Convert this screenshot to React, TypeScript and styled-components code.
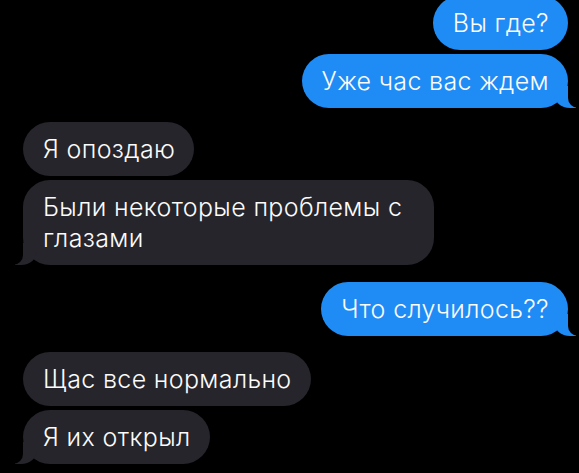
import React from 'react';
import styled, {createGlobalStyle, css} from "styled-components";

const GlobalStyle = createGlobalStyle`
  html, body {
    margin: 0;
    padding: 0;
    background: #000;
  }

  body {
    font-family: Inter, "Liberation Sans", Arial, sans-serif;
    -webkit-font-smoothing: antialiased;
  }
`

const Chat = styled.div`
  width: 579px;
  height: 473px;
  overflow: hidden;
  background: #000;
  display: flex;
  flex-direction: column;
  padding: 0 11px 0 23px;
  box-sizing: border-box;
`

const Bubble = styled.div<{ $mine?: boolean; $tail?: boolean; $gap: number }>`
  position: relative;
  align-self: ${p => p.$mine ? 'flex-end' : 'flex-start'};
  margin-top: ${p => p.$gap}px;
  max-width: 372px;
  padding: 12px 19px 11px 20px;
  border-radius: 27px;
  background: ${p => p.$mine ? '#1f8bf5' : '#26252b'};
  color: #fbfbfb;
  font-size: 25px;
  font-weight: 350;
  line-height: 31px;
  letter-spacing: 0.35px;
  z-index: 0;

  ${p => p.$tail && p.$mine && css`
    &::before {
      content: "";
      position: absolute;
      z-index: -1;
      bottom: 0;
      right: -8px;
      width: 22px;
      height: 22px;
      background: #1f8bf5;
      border-bottom-left-radius: 16px 14px;
    }

    &::after {
      content: "";
      position: absolute;
      z-index: -1;
      bottom: 0;
      right: -11px;
      width: 11px;
      height: 22px;
      background: #000;
      border-bottom-left-radius: 10px;
    }
  `}

  ${p => p.$tail && !p.$mine && css`
    &::before {
      content: "";
      position: absolute;
      z-index: -1;
      bottom: 0;
      left: -8px;
      width: 22px;
      height: 22px;
      background: #26252b;
      border-bottom-right-radius: 16px 14px;
    }

    &::after {
      content: "";
      position: absolute;
      z-index: -1;
      bottom: 0;
      left: -11px;
      width: 11px;
      height: 22px;
      background: #000;
      border-bottom-right-radius: 10px;
    }
  `}
`

const messages = [
    {text: 'Вы где?', mine: true, gap: -4},
    {text: 'Уже час вас ждем', mine: true, tail: true, gap: 4},
    {text: 'Я опоздаю', gap: 14},
    {text: 'Были некоторые проблемы с глазами', tail: true, gap: 4},
    {text: 'Что случилось??', mine: true, tail: true, gap: 17},
    {text: 'Щас все нормально', gap: 16},
    {text: 'Я их открыл', tail: true, gap: 4},
]

const App: React.FC = () => {
    return (
        <>
            <GlobalStyle/>
            <Chat>
                {messages.map((m, i) => (
                    <Bubble key={i} $mine={m.mine} $tail={m.tail} $gap={m.gap}>
                        {m.text}
                    </Bubble>
                ))}
            </Chat>
        </>
    )
}
export default App;
